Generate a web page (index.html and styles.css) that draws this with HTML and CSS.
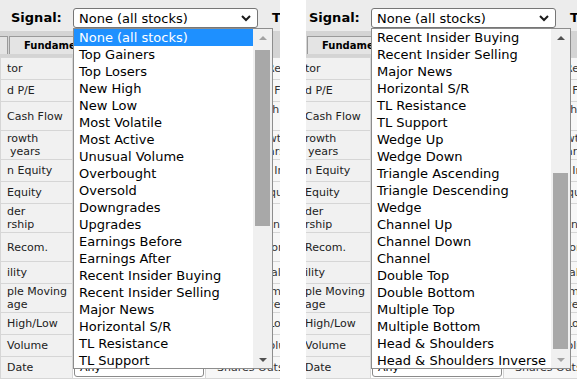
FILE: index.html
```html
<!DOCTYPE html>
<html lang="en">
<head>
  <meta charset="UTF-8">
  <title>Signal Dropdown</title>
  <link rel="stylesheet" href="styles.css">
</head>
<body>

<div class="shots">

  <!-- Left: list scrolled to the top -->
  <div class="shot shot-left">
    <div class="page">
      <div class="filter-bar">
        <span class="filter-label">Signal:</span>
        <div class="select">
          <span>None (all stocks)</span>
          <svg class="chevron" width="10" height="7" viewBox="0 0 10 7"><polyline points="1,1 5,5 9,1" fill="none" stroke="#1a1a1a" stroke-width="2"/></svg>
        </div>
        <span class="filter-next">Tickers:</span>
      </div>

      <div class="tabs">
        <span class="tab tab-stub"></span>
        <span class="tab">Fundamental</span>
      </div>

      <table class="grid">
        <tbody>
          <tr class="row-s"><td class="lbl">tor</td><td class="sel-cell"><div class="mini-select">Any</div></td><td class="lbl2">Analysts Recom.</td></tr>
          <tr class="row-s"><td class="lbl">d P/E</td><td class="sel-cell"><div class="mini-select">Any</div></td><td class="lbl2">PEG Ratio Forward</td></tr>
          <tr class="row-t"><td class="lbl">Cash Flow</td><td class="sel-cell"><div class="mini-select">Any</div></td><td class="lbl2">EPS growth<br>this year</td></tr>
          <tr class="row-t"><td class="lbl">rowth<br><span class="indent">years</span></td><td class="sel-cell"><div class="mini-select">Any</div></td><td class="lbl2">Sales growth<br>past 5 years</td></tr>
          <tr class="row-s"><td class="lbl">n Equity</td><td class="sel-cell"><div class="mini-select">Any</div></td><td class="lbl2">Return on Investment</td></tr>
          <tr class="row-s"><td class="lbl">Equity</td><td class="sel-cell"><div class="mini-select">Any</div></td><td class="lbl2">LT Debt/Equity Ratio</td></tr>
          <tr class="row-t"><td class="lbl">der<br>rship</td><td class="sel-cell"><div class="mini-select">Any</div></td><td class="lbl2">Insider<br>Transactions</td></tr>
          <tr class="row-t"><td class="lbl">Recom.</td><td class="sel-cell"><div class="mini-select">Any</div></td><td class="lbl2">Option/Short</td></tr>
          <tr class="row-s"><td class="lbl">ility</td><td class="sel-cell"><div class="mini-select">Any</div></td><td class="lbl2">RSI (14) Value</td></tr>
          <tr class="row-t"><td class="lbl">ple Moving<br>age</td><td class="sel-cell"><div class="mini-select">Any</div></td><td class="lbl2">50-Day Simple<br>Moving Average</td></tr>
          <tr class="row-s"><td class="lbl">High/Low</td><td class="sel-cell"><div class="mini-select">Any</div></td><td class="lbl2">52-Week Low Price</td></tr>
          <tr class="row-s"><td class="lbl">Volume</td><td class="sel-cell"><div class="mini-select">Any</div></td><td class="lbl2">Current Volume</td></tr>
          <tr class="row-s"><td class="lbl">Date</td><td class="sel-cell"><div class="mini-select">Any</div></td><td class="lbl2">Shares Outstanding</td></tr>
        </tbody>
      </table>

      <div class="dropdown">
        <ul class="options">
          <li class="active">None (all stocks)</li>
          <li>Top Gainers</li>
          <li>Top Losers</li>
          <li>New High</li>
          <li>New Low</li>
          <li>Most Volatile</li>
          <li>Most Active</li>
          <li>Unusual Volume</li>
          <li>Overbought</li>
          <li>Oversold</li>
          <li>Downgrades</li>
          <li>Upgrades</li>
          <li>Earnings Before</li>
          <li>Earnings After</li>
          <li>Recent Insider Buying</li>
          <li>Recent Insider Selling</li>
          <li>Major News</li>
          <li>Horizontal S/R</li>
          <li>TL Resistance</li>
          <li>TL Support</li>
        </ul>
        <div class="scrollbar">
          <div class="scroll-btn"><span class="arrow-up disabled"></span></div>
          <div class="thumb thumb-top"></div>
          <div class="scroll-btn scroll-btn-end"><span class="arrow-down"></span></div>
        </div>
      </div>
    </div>
  </div>

  <!-- Right: list scrolled further down -->
  <div class="shot shot-right">
    <div class="page">
      <div class="filter-bar">
        <span class="filter-label">Signal:</span>
        <div class="select">
          <span>None (all stocks)</span>
          <svg class="chevron" width="10" height="7" viewBox="0 0 10 7"><polyline points="1,1 5,5 9,1" fill="none" stroke="#1a1a1a" stroke-width="2"/></svg>
        </div>
        <span class="filter-next">Tickers:</span>
      </div>

      <div class="tabs">
        <span class="tab tab-stub"></span>
        <span class="tab">Fundamental</span>
      </div>

      <table class="grid">
        <tbody>
          <tr class="row-s"><td class="lbl">tor</td><td class="sel-cell"><div class="mini-select">Any</div></td><td class="lbl2">Analysts Recom.</td></tr>
          <tr class="row-s"><td class="lbl">d P/E</td><td class="sel-cell"><div class="mini-select">Any</div></td><td class="lbl2">PEG Ratio Forward</td></tr>
          <tr class="row-t"><td class="lbl">Cash Flow</td><td class="sel-cell"><div class="mini-select">Any</div></td><td class="lbl2">EPS growth<br>this year</td></tr>
          <tr class="row-t"><td class="lbl">rowth<br><span class="indent">years</span></td><td class="sel-cell"><div class="mini-select">Any</div></td><td class="lbl2">Sales growth<br>past 5 years</td></tr>
          <tr class="row-s"><td class="lbl">n Equity</td><td class="sel-cell"><div class="mini-select">Any</div></td><td class="lbl2">Return on Investment</td></tr>
          <tr class="row-s"><td class="lbl">Equity</td><td class="sel-cell"><div class="mini-select">Any</div></td><td class="lbl2">LT Debt/Equity Ratio</td></tr>
          <tr class="row-t"><td class="lbl">der<br>rship</td><td class="sel-cell"><div class="mini-select">Any</div></td><td class="lbl2">Insider<br>Transactions</td></tr>
          <tr class="row-t"><td class="lbl">Recom.</td><td class="sel-cell"><div class="mini-select">Any</div></td><td class="lbl2">Option/Short</td></tr>
          <tr class="row-s"><td class="lbl">ility</td><td class="sel-cell"><div class="mini-select">Any</div></td><td class="lbl2">RSI (14) Value</td></tr>
          <tr class="row-t"><td class="lbl">ple Moving<br>age</td><td class="sel-cell"><div class="mini-select">Any</div></td><td class="lbl2">50-Day Simple<br>Moving Average</td></tr>
          <tr class="row-s"><td class="lbl">High/Low</td><td class="sel-cell"><div class="mini-select">Any</div></td><td class="lbl2">52-Week Low Price</td></tr>
          <tr class="row-s"><td class="lbl">Volume</td><td class="sel-cell"><div class="mini-select">Any</div></td><td class="lbl2">Current Volume</td></tr>
          <tr class="row-s"><td class="lbl">Date</td><td class="sel-cell"><div class="mini-select">Any</div></td><td class="lbl2">Shares Outstanding</td></tr>
        </tbody>
      </table>

      <div class="dropdown">
        <ul class="options">
          <li>Recent Insider Buying</li>
          <li>Recent Insider Selling</li>
          <li>Major News</li>
          <li>Horizontal S/R</li>
          <li>TL Resistance</li>
          <li>TL Support</li>
          <li>Wedge Up</li>
          <li>Wedge Down</li>
          <li>Triangle Ascending</li>
          <li>Triangle Descending</li>
          <li>Wedge</li>
          <li>Channel Up</li>
          <li>Channel Down</li>
          <li>Channel</li>
          <li>Double Top</li>
          <li>Double Bottom</li>
          <li>Multiple Top</li>
          <li>Multiple Bottom</li>
          <li>Head &amp; Shoulders</li>
          <li>Head &amp; Shoulders Inverse</li>
        </ul>
        <div class="scrollbar">
          <div class="scroll-btn"><span class="arrow-up"></span></div>
          <div class="thumb thumb-bottom"></div>
          <div class="scroll-btn scroll-btn-end"><span class="arrow-down disabled"></span></div>
        </div>
      </div>
    </div>
  </div>

</div>

</body>
</html>
```

FILE: styles.css
```css
body {
  margin: 0;
  background-color: #fff;
  color: #000;
  font-family: "DejaVu Sans", Verdana, sans-serif;
  font-size: 13px;
}

.shots {
  display: flex;
  gap: 26px;
}

.shot {
  flex: none;
  height: 379px;
  overflow: hidden;
}

.shot-left {
  width: 280px;
}

.shot-right {
  width: 271px;
}

.page {
  position: relative;
  width: 620px;
}

.shot-right .page {
  margin-left: -8px;
}

/* Filter bar */
.filter-bar {
  display: flex;
  align-items: flex-start;
  height: 31px;
  padding: 8px 0 0 11px;
  box-sizing: border-box;
  background-color: #ececec;
}

.filter-label {
  width: 62px;
  line-height: 20px;
  font-weight: bold;
}

.select {
  display: flex;
  align-items: center;
  justify-content: space-between;
  width: 185px;
  height: 20px;
  padding: 0 6px 0 5px;
  box-sizing: border-box;
  border: 1px solid #767676;
  border-radius: 3px;
  background-color: #fff;
}

.chevron {
  display: block;
}

.filter-next {
  margin-left: 14px;
  line-height: 20px;
  font-weight: bold;
  white-space: nowrap;
}

/* Tabs */
.tabs {
  display: flex;
  gap: 1px;
  height: 26px;
  padding-top: 5px;
  box-sizing: border-box;
  background-color: #d4d4d4;
}

.tab {
  height: 17px;
  padding: 0 14px;
  border: 1px solid #9a9a9a;
  border-bottom: none;
  background-color: #e4e4e4;
  font-size: 10px;
  font-weight: bold;
  line-height: 17px;
  white-space: nowrap;
}

.tab-stub {
  width: 7px;
  padding: 0;
  border-left: none;
}

/* Background screener table */
.grid {
  border-collapse: collapse;
  table-layout: fixed;
  width: 420px;
}

.grid td {
  border: 1px solid #d6d6d6;
  padding: 0;
  white-space: nowrap;
  overflow: hidden;
}

.row-s {
  height: 22px;
}

.row-t {
  height: 29px;
}

.lbl {
  width: 65px;
  padding-left: 6px !important;
  background-color: #f1f1f1;
  color: #222;
  font-size: 11px;
  line-height: 13px;
}

.lbl .indent {
  padding-left: 3px;
}

.sel-cell {
  width: 132px;
  background-color: #fff;
}

.mini-select {
  width: 130px;
  height: 18px;
  margin-left: 1px;
  padding-left: 5px;
  box-sizing: border-box;
  border: 1px solid #8a8a8a;
  border-radius: 3px;
  font-size: 11px;
  line-height: 16px;
}

.lbl2 {
  padding-left: 11px !important;
  background-color: #f7f7f7;
  color: #333;
  font-size: 11px;
  line-height: 13px;
}

/* Open dropdown list */
.dropdown {
  position: absolute;
  top: 28px;
  left: 73px;
  z-index: 1;
  display: flex;
  width: 200px;
  height: 341px;
  box-sizing: border-box;
  border: 1px solid #8d8d8d;
  background-color: #fff;
}

.options {
  list-style: none;
  margin: 0;
  padding: 0;
  width: 179px;
  overflow: hidden;
}

.options li {
  height: 17px;
  padding-left: 5px;
  line-height: 17px;
  white-space: nowrap;
}

.options li.active {
  background-color: #1e90ff;
  color: #fff;
}

.scrollbar {
  display: flex;
  flex-direction: column;
  align-items: center;
  width: 19px;
  background-color: #f0f0f0;
}

.scroll-btn {
  display: flex;
  align-items: center;
  justify-content: center;
  width: 100%;
  height: 17px;
  flex: none;
}

.scroll-btn-end {
  margin-top: auto;
}

.arrow-up,
.arrow-down {
  width: 0;
  height: 0;
  border-left: 4px solid transparent;
  border-right: 4px solid transparent;
}

.arrow-up {
  border-bottom: 4px solid #505050;
}

.arrow-down {
  border-top: 4px solid #505050;
}

.arrow-up.disabled {
  border-bottom-color: #a3a3a3;
}

.arrow-down.disabled {
  border-top-color: #a3a3a3;
}

.thumb {
  width: 15px;
  height: 176px;
  flex: none;
  background-color: #a8a8a8;
}

.thumb-top {
  margin-top: 4px;
}

.thumb-bottom {
  margin-top: 127px;
}
```
